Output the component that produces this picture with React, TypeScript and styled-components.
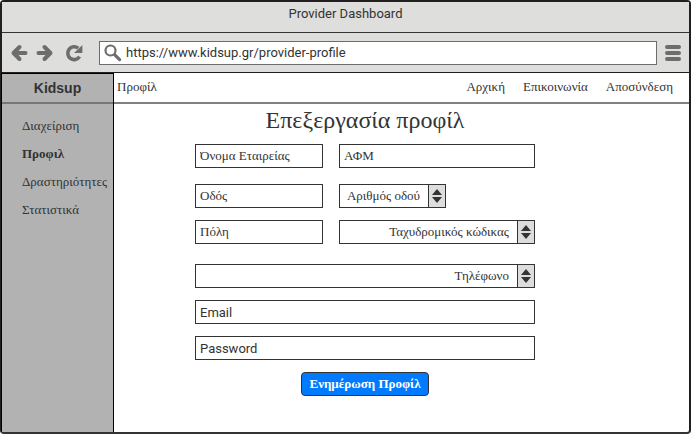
import React from "react";
import styled, { createGlobalStyle } from "styled-components";

const serif = `"Liberation Serif", "Times New Roman", serif`;
const sans = `Roboto, "Liberation Sans", sans-serif`;
const ink = "#333333";

const GlobalStyle = createGlobalStyle`
  *, *::before, *::after { box-sizing: border-box; }
  html { background: #ffffff; }
  body { margin: 0; color: ${ink}; font-family: ${serif}; font-size: 14px; }
`;

const BrowserWindow = styled.div`
  display: flex;
  flex-direction: column;
  min-height: 100vh;
  border: 2px solid #231f20;
  border-bottom-color: #333333;
  border-radius: 4px;
  background: #ffffff;
`;

const TitleBar = styled.header`
  height: 31px;
  padding-top: 3px;
  border-bottom: 1px solid ${ink};
  background: #dededc;
  font-family: ${sans};
  font-size: 13px;
  line-height: 18px;
  text-align: center;
`;

const Toolbar = styled.div`
  display: flex;
  align-items: center;
  height: 40px;
  padding: 0 8px;
  border-bottom: 1px solid #231f20;
  background: #dededc;
`;

const IconButton = styled.button<{ $gap?: number }>`
  display: flex;
  flex: none;
  margin: 0 ${(p) => p.$gap ?? 0}px 0 0;
  padding: 0;
  border: 0;
  background: none;
  color: #6d6d6d;
`;

const AddressBar = styled.label`
  display: flex;
  flex: 1;
  align-items: center;
  gap: 4px;
  height: 24px;
  margin-right: 8px;
  padding-left: 4px;
  border: 1px solid #6d6d6d;
  background: #ffffff;
  color: #6d6d6d;
`;

const AddressInput = styled.input`
  flex: 1;
  min-width: 0;
  padding: 0;
  border: 0;
  outline: 0;
  background: none;
  color: ${ink};
  font-family: ${sans};
  font-size: 13px;
`;

const Page = styled.div`
  display: flex;
  flex: 1;
`;

const Sidebar = styled.aside`
  flex: none;
  width: 113px;
  margin-left: -1px;
  border: 1px solid #000000;
  border-bottom: 0;
  background: #b2b2b2;
`;

const Brand = styled.div`
  height: 30px;
  border-bottom: 2px solid #777777;
  font-family: "Liberation Sans", sans-serif;
  font-size: 14px;
  font-weight: 700;
  line-height: 29px;
  text-align: center;
`;

const SideNav = styled.nav`
  display: flex;
  flex-direction: column;
  gap: 12px;
  padding: 14px 0 0 20px;
`;

const NavLink = styled.a<{ $active?: boolean }>`
  color: ${ink};
  font-size: 13px;
  font-weight: ${(p) => (p.$active ? 700 : 400)};
  line-height: 16px;
  text-decoration: none;
  white-space: nowrap;
`;

const Main = styled.main`
  flex: 1;
  min-width: 0;
`;

const PageHeader = styled.div`
  display: flex;
  align-items: center;
  height: 31px;
  padding: 0 16px 2px 3px;
  border-bottom: 2px solid #808080;
`;

const TopNav = styled.nav`
  display: flex;
  gap: 18px;
  margin-left: auto;
`;

const Form = styled.form`
  display: grid;
  grid-template-columns: 128px 196px;
  column-gap: 16px;
  margin: 0 154px 0 81px;
`;

const Heading = styled.h1`
  grid-column: 1 / -1;
  margin: 0 0 8px;
  font-size: 24px;
  font-weight: 400;
  line-height: 32px;
  text-align: center;
  white-space: nowrap;
`;

const Field = styled.div<{ $wide?: boolean; $width?: number; $after?: number }>`
  display: flex;
  grid-column: ${(p) => (p.$wide ? "1 / -1" : "auto")};
  width: ${(p) => (p.$width ? `${p.$width}px` : "auto")};
  height: 24px;
  margin-bottom: ${(p) => p.$after ?? 12}px;
  border: 1px solid ${ink};
  background: #ffffff;
`;

const TextInput = styled.input<{ $latin?: boolean; $right?: boolean }>`
  flex: 1;
  min-width: 0;
  padding: 0 ${(p) => (p.$right ? 8 : 4)}px 0 4px;
  border: 0;
  outline: 0;
  background: none;
  color: ${ink};
  font-family: ${(p) => (p.$latin ? sans : serif)};
  font-size: 13px;
  text-align: ${(p) => (p.$right ? "right" : "left")};

  &::placeholder {
    color: ${ink};
    opacity: 1;
  }
`;

const Stepper = styled.div`
  display: flex;
  flex: none;
  flex-direction: column;
  width: 17px;
  border-left: 1px solid ${ink};
  background: #dddddd;
`;

const StepButton = styled.button<{ $up?: boolean }>`
  display: flex;
  flex: 1;
  align-items: ${(p) => (p.$up ? "flex-end" : "flex-start")};
  justify-content: center;
  padding: ${(p) => (p.$up ? "0 0 1px" : "1px 0 0")};
  border: 0;
  background: none;
  color: ${ink};
`;

const Submit = styled.button`
  grid-column: 1 / -1;
  justify-self: center;
  width: 128px;
  height: 24px;
  padding: 0 0 1px;
  border: 1px solid ${ink};
  border-radius: 4px;
  background: #007bff;
  color: #ffffff;
  font-family: ${serif};
  font-size: 13px;
  font-weight: 700;
`;

function Arrow({ back }: { back?: boolean }) {
  return (
    <svg width="18" height="18" viewBox="0 0 18 18" fill="none" stroke="currentColor" strokeWidth="4" strokeLinecap="round" strokeLinejoin="round">
      <path d={back ? "M9.5 3 3.5 9l6 6M4 9h11.5" : "M8.5 3l6 6-6 6M14 9H2.5"} />
    </svg>
  );
}

function StepperButtons({ name }: { name: string }) {
  return (
    <Stepper>
      <StepButton $up type="button" aria-label={`${name} +`}>
        <svg width="10" height="6" viewBox="0 0 10 6"><path d="M5 0 10 6H0z" fill="currentColor" /></svg>
      </StepButton>
      <StepButton type="button" aria-label={`${name} −`}>
        <svg width="10" height="6" viewBox="0 0 10 6"><path d="M0 0h10L5 6z" fill="currentColor" /></svg>
      </StepButton>
    </Stepper>
  );
}

type EntryProps = {
  name: string;
  type?: string;
  latin?: boolean;
  stepper?: boolean;
  wide?: boolean;
  width?: number;
  after?: number;
};

function Entry({ name, type = "text", latin, stepper, wide, width, after }: EntryProps) {
  return (
    <Field $wide={wide} $width={width} $after={after}>
      <TextInput type={type} placeholder={name} aria-label={name} $latin={latin} $right={stepper} inputMode={stepper ? "numeric" : undefined} />
      {stepper && <StepperButtons name={name} />}
    </Field>
  );
}

export default function App() {
  return (
    <>
      <GlobalStyle />
      <BrowserWindow>
        <TitleBar>Provider Dashboard</TitleBar>
        <Toolbar>
          <IconButton $gap={8} aria-label="Back"><Arrow back /></IconButton>
          <IconButton $gap={11} aria-label="Forward"><Arrow /></IconButton>
          <IconButton $gap={16} aria-label="Reload">
            <svg width="18" height="18" viewBox="0 0 18 18">
              <path d="M14.6 12.6A6.4 6.4 0 1 1 13.2 4.2" fill="none" stroke="currentColor" strokeWidth="3.6" />
              <path d="M17.4 1v8H9z" fill="currentColor" />
            </svg>
          </IconButton>
          <AddressBar>
            <svg width="18" height="18" viewBox="0 0 18 18" fill="none" stroke="currentColor">
              <circle cx="6.5" cy="6.5" r="5" strokeWidth="2.2" />
              <path d="m10.8 10.8 4.8 4.8" strokeWidth="3.2" strokeLinecap="round" />
            </svg>
            <AddressInput aria-label="Address" defaultValue="https://www.kidsup.gr/provider-profile" />
          </AddressBar>
          <IconButton aria-label="Menu">
            <svg width="16" height="16" viewBox="0 0 16 16" stroke="currentColor" strokeWidth="4" strokeLinecap="round">
              <path d="M2 2h12M2 8h12M2 14h12" />
            </svg>
          </IconButton>
        </Toolbar>
        <Page>
          <Sidebar>
            <Brand>Kidsup</Brand>
            <SideNav>
              <NavLink href="#manage">Διαχείριση</NavLink>
              <NavLink href="#profile" $active>Προφιλ</NavLink>
              <NavLink href="#activities">Δραστηριότητες</NavLink>
              <NavLink href="#statistics">Στατιστικά</NavLink>
            </SideNav>
          </Sidebar>
          <Main>
            <PageHeader>
              <NavLink href="#profile">Προφίλ</NavLink>
              <TopNav>
                <NavLink href="#home">Αρχική</NavLink>
                <NavLink href="#contact">Επικοινωνία</NavLink>
                <NavLink href="#logout">Αποσύνδεση</NavLink>
              </TopNav>
            </PageHeader>
            <Form>
              <Heading>Επεξεργασία προφίλ</Heading>
              <Entry name="Όνομα Εταιρείας" after={16} />
              <Entry name="ΑΦΜ" after={16} />
              <Entry name="Οδός" />
              <Entry name="Αριθμός οδού" stepper width={107} />
              <Entry name="Πόλη" after={20} />
              <Entry name="Ταχυδρομικός κώδικας" stepper after={20} />
              <Entry name="Τηλέφωνο" stepper wide />
              <Entry name="Email" type="email" latin wide />
              <Entry name="Password" type="password" latin wide />
              <Submit type="button">Ενημέρωση Προφίλ</Submit>
            </Form>
          </Main>
        </Page>
      </BrowserWindow>
    </>
  );
}
